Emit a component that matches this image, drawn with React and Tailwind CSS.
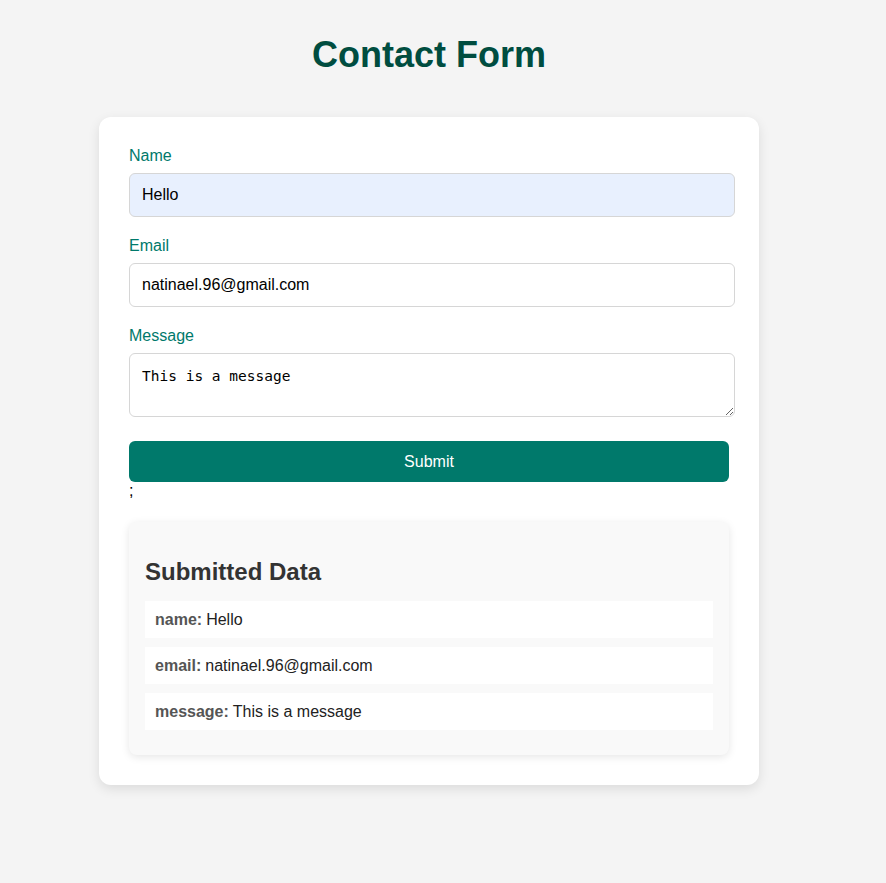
const fields = [
  { label: "Name", value: "Hello", autofill: true },
  { label: "Email", value: "natinael.96@gmail.com" }
];

const submitted = [
  { key: "name", value: "Hello" },
  { key: "email", value: "natinael.96@gmail.com" },
  { key: "message", value: "This is a message" }
];

export default function App() {
  return (
    <div className="min-h-screen bg-[#f4f4f4] font-['Liberation_Sans',Arial,sans-serif]">
      <div className="ml-[99px] w-[660px] pt-[34px] pb-[98px]">
        <h1 className="mb-[41px] text-center text-[36px] leading-[42px] font-bold text-[#004d40]">Contact Form</h1>

        <div className="rounded-[12px] bg-white p-[30px] shadow-[0_4px_12px_rgba(0,0,0,0.1)]">
          <form onSubmit={(e) => e.preventDefault()}>
            {fields.map((f) => (
              <div key={f.label} className="mb-[20px]">
                <label className="mb-[8px] block text-[16px] leading-[18px] text-[#00796b]">{f.label}</label>
                <input
                  readOnly
                  defaultValue={f.value}
                  className={`block h-[44px] w-[606px] rounded-[6px] border border-[#d6d6d6] px-[12px] text-[16px] text-black outline-none ${
                    f.autofill ? "bg-[#e8f0fe]" : "bg-white"
                  }`}
                />
              </div>
            ))}
            <div className="mb-[24px]">
              <label className="mb-[8px] block text-[16px] leading-[18px] text-[#00796b]">Message</label>
              <textarea
                readOnly
                defaultValue="This is a message"
                className="block h-[64px] w-[606px] resize rounded-[6px] border border-[#d6d6d6] bg-white px-[12px] pt-[14px] pb-[8px] font-['DejaVu_Sans_Mono',monospace] text-[14.5px] leading-[17px] text-black outline-none"
              />
            </div>
            <button
              type="submit"
              className="flex h-[41px] w-[600px] items-center justify-center rounded-[6px] bg-[#00796b] text-[16px] text-white"
            >
              Submit
            </button>
          </form>
          <div className="text-[16px] leading-[18px] text-black">;</div>

          <div className="mt-[22px] rounded-[8px] bg-[#f9f9f9] px-[16px] pt-[36px] pb-[25px] shadow-[0_2px_8px_rgba(0,0,0,0.1)]">
            <h2 className="mb-[15px] text-[24px] leading-[28px] font-bold text-[#333]">Submitted Data</h2>
            <ul className="flex flex-col gap-[9px]">
              {submitted.map((item) => (
                <li key={item.key} className="flex h-[37px] items-center bg-white px-[10px] text-[16px] text-[#222]">
                  <strong className="mr-[4px] font-bold text-[#555]">{item.key}:</strong>
                  {item.value}
                </li>
              ))}
            </ul>
          </div>
        </div>
      </div>
    </div>
  );
}
